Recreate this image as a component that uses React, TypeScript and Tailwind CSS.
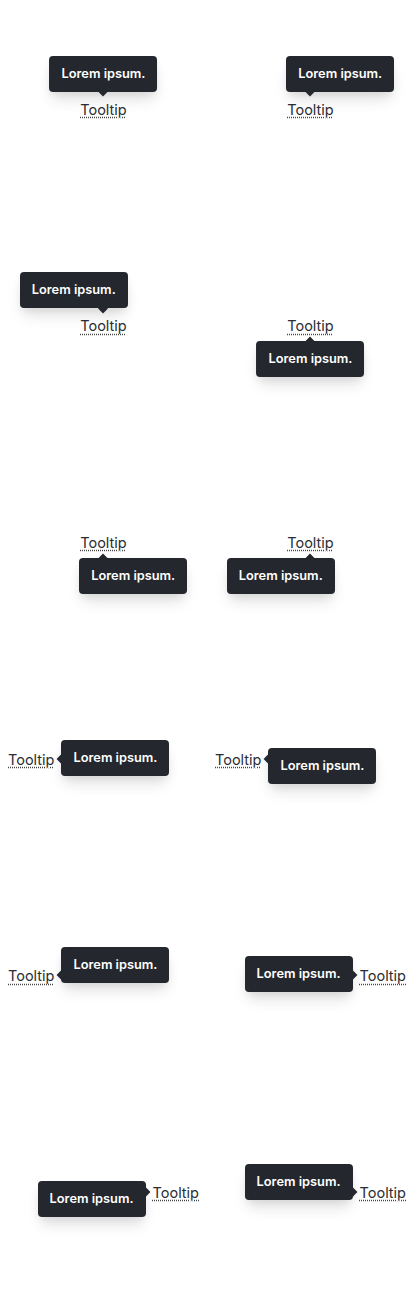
import React from "react";

type Placement =
    | "top" | "top-start" | "top-end"
    | "bottom" | "bottom-start" | "bottom-end"
    | "right" | "right-start" | "right-end"
    | "left" | "left-start" | "left-end";

// where the bubble sits around the trigger
const boxPos: Record<Placement, string> = {
    "top": "bottom-[calc(100%+9px)] left-1/2 -translate-x-1/2",
    "top-start": "bottom-[calc(100%+9px)] left-[-1px]",
    "top-end": "bottom-[calc(100%+9px)] right-[-1px]",
    "bottom": "top-[calc(100%+6px)] left-1/2 -translate-x-1/2",
    "bottom-start": "top-[calc(100%+6px)] left-[-1px]",
    "bottom-end": "top-[calc(100%+6px)] right-[-1px]",
    "right": "left-[calc(100%+7px)] top-[calc(50%-2px)] -translate-y-1/2",
    "right-start": "left-[calc(100%+7px)] top-[-3px]",
    "right-end": "left-[calc(100%+7px)] bottom-[2px]",
    "left": "right-[calc(100%+7px)] top-[calc(50%-2px)] -translate-y-1/2",
    "left-start": "right-[calc(100%+7px)] top-[-3px]",
    "left-end": "right-[calc(100%+7px)] bottom-[2px]",
};

// arrow always points at the middle of the trigger
const arrowPos: Record<string, string> = {
    top: "bottom-[calc(100%+5.5px)] left-1/2 -translate-x-1/2",
    bottom: "top-[calc(100%+2.5px)] left-1/2 -translate-x-1/2",
    right: "left-[calc(100%+3.5px)] top-[calc(50%-1px)] -translate-y-1/2",
    left: "right-[calc(100%+3.5px)] top-[calc(50%-1px)] -translate-y-1/2",
};

function Tip({ placement }: { placement: Placement }) {
    const side = placement.split("-")[0];
    return (
        <span className="relative mt-[3px] inline-block text-[14.5px] leading-[18px] text-[#2a2d33] underline decoration-dotted decoration-[#444] underline-offset-[2px]">
            Tooltip
            <span className={`absolute ${boxPos[placement]} whitespace-nowrap rounded-[4px] bg-[#24272e] px-3 py-2 text-[0.8rem] leading-5 font-semibold text-white no-underline shadow-[0_10px_15px_-3px_rgba(0,0,0,0.12),0_4px_8px_-2px_rgba(0,0,0,0.08)]`}>
                Lorem ipsum.
            </span>
            <span className={`absolute ${arrowPos[side]} h-[7px] w-[7px] rotate-45 bg-[#24272e]`} />
        </span>
    );
}

const cells: { placement: Placement; align: string }[] = [
    { placement: "top", align: "justify-center" },
    { placement: "top-start", align: "justify-center" },
    { placement: "top-end", align: "justify-center" },
    { placement: "bottom", align: "justify-center" },
    { placement: "bottom-start", align: "justify-center" },
    { placement: "bottom-end", align: "justify-center" },
    { placement: "right", align: "justify-start pl-[8px]" },
    { placement: "right-start", align: "justify-start pl-[8px]" },
    { placement: "right-end", align: "justify-start pl-[8px]" },
    { placement: "left", align: "justify-end pr-[8px]" },
    { placement: "left-start", align: "justify-end pr-[8px]" },
    { placement: "left-end", align: "justify-end pr-[8px]" },
];

export default function App() {
    return (
        <div className="grid h-[1300px] w-full grid-cols-2 grid-rows-6 bg-white font-['Inter','Noto_Sans',sans-serif]">
            {cells.map((c) => (
                <div key={c.placement} className={`flex items-center ${c.align}`}>
                    <Tip placement={c.placement} />
                </div>
            ))}
        </div>
    );
}
